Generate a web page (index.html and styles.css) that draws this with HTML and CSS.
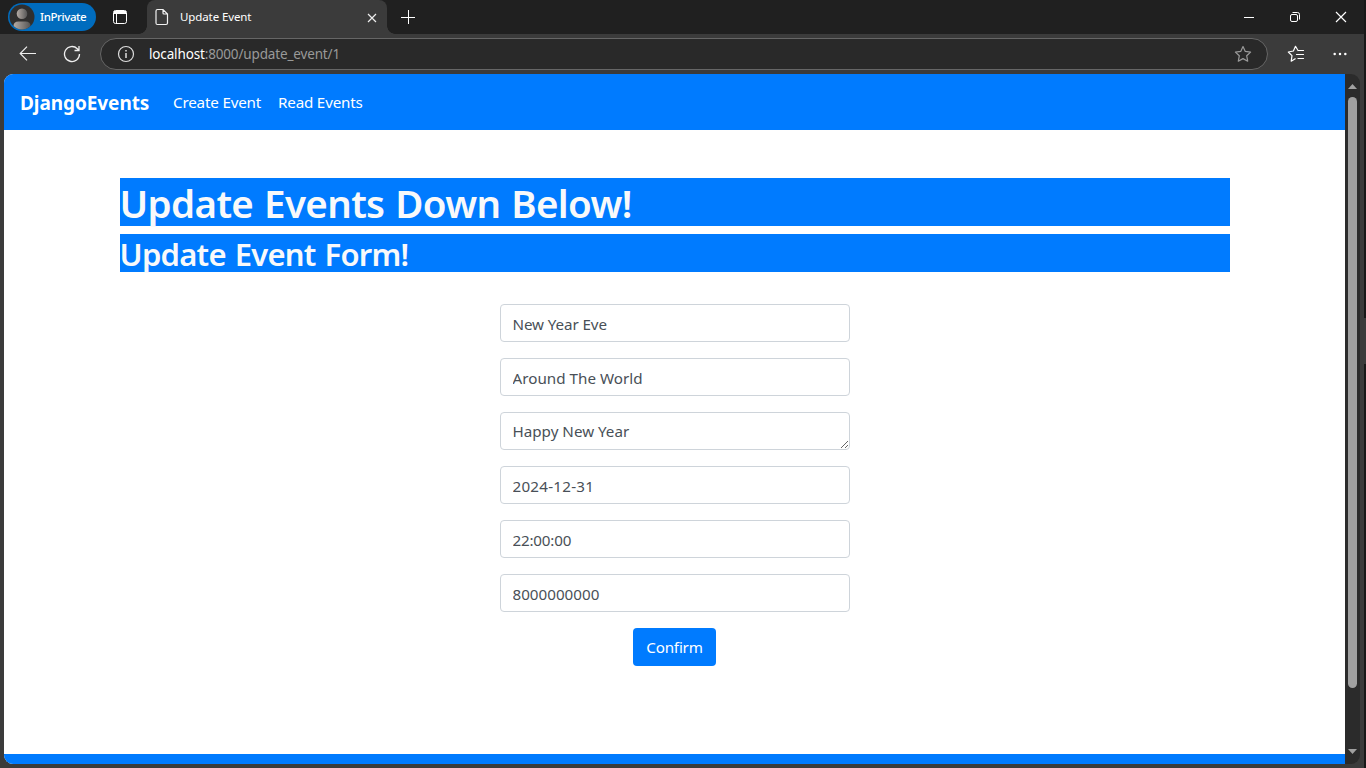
FILE: index.html
```html
<!DOCTYPE html>
<html lang="en">
<head>
<meta charset="utf-8">
<title>Update Event</title>
<link rel="stylesheet" href="styles.css">
</head>
<body>
<div class="desktop">
<div class="window">
  <header class="tabstrip">
    <div class="profile">
      <svg class="avatar" width="26" height="26" viewBox="0 0 26 26"><defs><linearGradient id="g" x1="0" x2="1"><stop offset="0" stop-color="#b5aca5"/><stop offset="1" stop-color="#555"/></linearGradient><clipPath id="c"><circle cx="13" cy="13" r="12.5"/></clipPath></defs><circle cx="13" cy="13" r="12.5" fill="#302f2e"/><g clip-path="url(#c)" fill="url(#g)"><circle cx="13" cy="9.700" r="5.300"/><path d="M4.500 26v-4q0-4.500 5-4.500h7q5 0 5 4.500v4z"/></g></svg>
      <span>InPrivate</span>
    </div>
    <svg class="workspaces" width="16" height="16" viewBox="0 0 16 16" fill="none" stroke="#fff"><rect x="1.500" y="1.500" width="13" height="13" rx="2"/><path d="M2 3.500h12M2 2.500h12M2 4.500h12M4.500 5v9"/></svg>
    <div class="tab">
      <svg width="14" height="18" viewBox="0 0 14 18" fill="none" stroke="#f2f2f2" stroke-width="1.200"><path d="M2.500 1.500h5.500l4.500 4.500v9q0 1.500-1.500 1.500H2.500q-1.500 0-1.500-1.500V3q0-1.500 1.500-1.500zM8 1.500V5q0 1 1 1h3.500"/></svg>
      <span>Update Event</span>
      <svg class="close-tab" width="10" height="10" viewBox="0 0 10 10" stroke="#eee" stroke-width="1.200"><path d="M1 1l8 8M9 1l-8 8"/></svg>
    </div>
    <svg class="new-tab" width="16" height="16" viewBox="0 0 16 16" stroke="#fff"><path d="M1 8.500h14M8.500 1v14"/></svg>
    <div class="controls">
      <svg width="12" height="12" viewBox="0 0 12 12" stroke="#fff"><path d="M1 6.500h10"/></svg>
      <svg width="12" height="12" viewBox="0 0 12 12" fill="none" stroke="#fff"><rect x="1.500" y="3.500" width="7" height="7" rx="1.500"/><path d="M3.500 1.500h5q2 0 2 2v5"/></svg>
      <svg width="12" height="12" viewBox="0 0 12 12" stroke="#fff" stroke-width="1.150"><path d="M1 1l10 10M11 1L1 11"/></svg>
    </div>
  </header>
  <div class="toolbar">
    <svg class="back" width="18" height="16" viewBox="0 0 18 16" fill="none" stroke="#eee" stroke-width="1.200"><path d="M17 7.500H1.500M8 .7L1.200 7.500 8 14.300"/></svg>
    <svg class="reload" width="18" height="18" viewBox="0 0 18 18" fill="none" stroke="#eee" stroke-width="1.300"><path d="M16.500 9a7.500 7.500 0 1 1-2.200-5.300L16 5.400M16 1v4.500h-4.500"/></svg>
    <div class="address">
      <svg width="18" height="18" viewBox="0 0 18 18" fill="none" stroke="#ddd" stroke-width="1.200"><circle cx="9" cy="9" r="7.500"/><path d="M9 8v5M9 5v1.500" stroke-width="1.500"/></svg>
      <div class="url"><b>localhost</b>:8000/update_event/1</div>
      <svg class="favorite" width="18" height="18" viewBox="0 0 18 18" fill="none" stroke="#9a9a9a" stroke-width="1.200" stroke-linejoin="round"><path d="M9 1.500l2.300 4.900 5.300.7-3.900 3.700 1 5.400L9 13.600l-4.700 2.600 1-5.400L1.400 7.100l5.300-.7z"/></svg>
    </div>
    <svg class="favorites" width="18" height="18" viewBox="0 0 18 18" fill="none" stroke="#fff" stroke-width="1.200" stroke-linejoin="round" stroke-linecap="round"><path d="M11 5.500L8.500 1.300 6.400 6 1.300 7l3.700 3.700-.8 5.500 4-2.400M11 5.500h5.500M9.500 9.500h7M11 13.500h5.500"/></svg>
    <svg class="more" width="16" height="6" viewBox="0 0 16 6" fill="#fff"><circle cx="2.700" cy="3" r="1.250"/><circle cx="8" cy="3" r="1.250"/><circle cx="13.300" cy="3" r="1.250"/></svg>
  </div>
  <div class="viewport">
    <div class="page">
      <nav class="navbar"><a class="brand">DjangoEvents</a><a class="create">Create Event</a><a class="read">Read Events</a></nav>
      <main class="container">
        <h1>Update Events Down Below!</h1>
        <h2>Update Event Form!</h2>
        <form>
          <input class="field name" value="New Year Eve">
          <input class="field place" value="Around The World">
          <textarea class="field note" rows="1">Happy New Year</textarea>
          <input class="field date" value="2024-12-31">
          <input class="field time" value="22:00:00">
          <input class="field phone" value="8000000000">
          <button type="button" class="confirm">Confirm</button>
        </form>
      </main>
      <footer class="footer"></footer>
    </div>
    <div class="scrollbar">
      <svg width="9" height="5" viewBox="0 0 9 5" fill="#a0a0a0"><path d="M4.500 0L9 5H0z"/></svg>
      <div class="thumb"></div>
      <svg width="9" height="5" viewBox="0 0 9 5" fill="#a0a0a0"><path d="M0 0h9L4.500 5z"/></svg>
    </div>
  </div>
</div>
<div class="edge"><div class="edge-mark"></div></div>
</div>
</body>
</html>
```
FILE: styles.css
```css
* { box-sizing: border-box; }
body { margin: 0; font-family: "Noto Sans", sans-serif; overflow: hidden; }
svg { display: block; flex: none; }
.desktop { display: flex; width: 1366px; height: 768px; background: #181818; }
.window { display: flex; flex-direction: column; width: 1364px; background: #3b3b3b; }
.edge { width: 2px; padding-top: 318px; background: #181818; }
.edge-mark { height: 46px; background: #3b3b3b; }
.tabstrip { display: flex; align-items: center; height: 34px; width: 1366px; background: #202020; color: #fff; font-size: 12px; }
.profile { display: flex; align-items: center; width: 88px; height: 28px; margin-left: 8px; padding-left: 1px; border-radius: 14px; background: #006cbe; }
.profile span { margin-left: 5px; padding-bottom: 2px; font-size: 11.5px; font-weight: 500; letter-spacing: -.4px; white-space: nowrap; }
.workspaces { margin-left: 16px; }
.tab { position: relative; display: flex; align-items: center; width: 240px; height: 34px; margin-left: 19px; padding-left: 8px; background: #3b3b3b; border-radius: 8px 8px 0 0; }
.tab::before, .tab::after { content: ""; position: absolute; bottom: 0; width: 8px; height: 8px; }
.tab::before { left: -8px; background: radial-gradient(circle at 0 0, transparent 7.5px, #3b3b3b 8px); }
.tab::after { right: -8px; background: radial-gradient(circle at 100% 0, transparent 7.5px, #3b3b3b 8px); }
.tab span { margin-left: 11px; padding-bottom: 2px; font-size: 11.5px; letter-spacing: -.1px; }
.close-tab { margin: 1px 10.5px 0 auto; }
.new-tab { margin-left: 13px; }
.controls { display: flex; gap: 34px; margin-left: auto; margin-right: 19px; }
.toolbar { display: flex; align-items: center; height: 40px; flex: none; }
.back { margin-left: 19px; }
.reload { margin-left: 26px; }
.address { display: flex; align-items: center; width: 1168px; height: 32px; margin-left: 19px; padding: 0 15px 0 16px; border: 1px solid #666; border-radius: 16px; background: #292929; }
.url { margin-left: 14px; color: #999; font-size: 13.5px; letter-spacing: -.15px; }
.url b { color: #fff; font-weight: 400; }
.favorite { margin-left: auto; }
.favorites { margin-left: 19px; }
.more { margin-left: 27px; }
.viewport { display: flex; width: 1356px; height: 690px; margin-left: 4px; border-radius: 9px; overflow: hidden; background: #2b2b2b; }
.page { display: flex; flex-direction: column; width: 1341px; background: #fff; }
.navbar { display: flex; align-items: center; height: 56px; padding: 0 16px 1px; background: #007bff; color: #fff; }
.brand { width: 153px; padding-top: 2px; font-size: 19px; font-weight: 700; letter-spacing: -.07px; }
.create { width: 105px; font-size: 15.2px; letter-spacing: -.18px; }
.read { font-size: 15.2px; letter-spacing: -.19px; }
.container { width: 1110px; height: 624px; margin: 0 auto; padding-top: 48px; }
h1, h2 { margin: 0 0 8px; background: #007bff; color: #f8f9fa; font-weight: 600; white-space: nowrap; }
h1 { height: 48px; line-height: 51px; font-size: 38.5px; letter-spacing: -.65px; word-spacing: 1.5px; }
h2 { height: 38px; line-height: 40px; font-size: 31px; letter-spacing: -.75px; word-spacing: 1.5px; }
form { display: flex; flex-direction: column; align-items: center; gap: 16px; padding-top: 24px; }
.field { display: block; width: 350px; height: 38px; margin: 0; padding: 7px 12px 5px; border: 1px solid #ced4da; border-radius: 4px; background: #fff; color: #495057; font: 15.2px/24px "Noto Sans", sans-serif; letter-spacing: -.1px; }
.place { letter-spacing: .02px; }
.date { letter-spacing: .24px; }
.time { letter-spacing: -.2px; }
.phone { letter-spacing: 0; }
.note { padding-top: 6px; overflow: hidden; resize: vertical; letter-spacing: 0; }
.confirm { width: 83px; height: 38px; padding: 0 0 1px; border: 0; border-radius: 4px; background: #007bff; color: #fff; font: 15.2px "Noto Sans", sans-serif; letter-spacing: -.2px; }
.footer { height: 10px; background: #007bff; }
.scrollbar { display: flex; flex-direction: column; align-items: center; width: 15px; padding: 10px 0; }
.thumb { width: 9px; height: 591px; margin: 8px 0 auto; border-radius: 5px; background: #a0a0a0; }
```
